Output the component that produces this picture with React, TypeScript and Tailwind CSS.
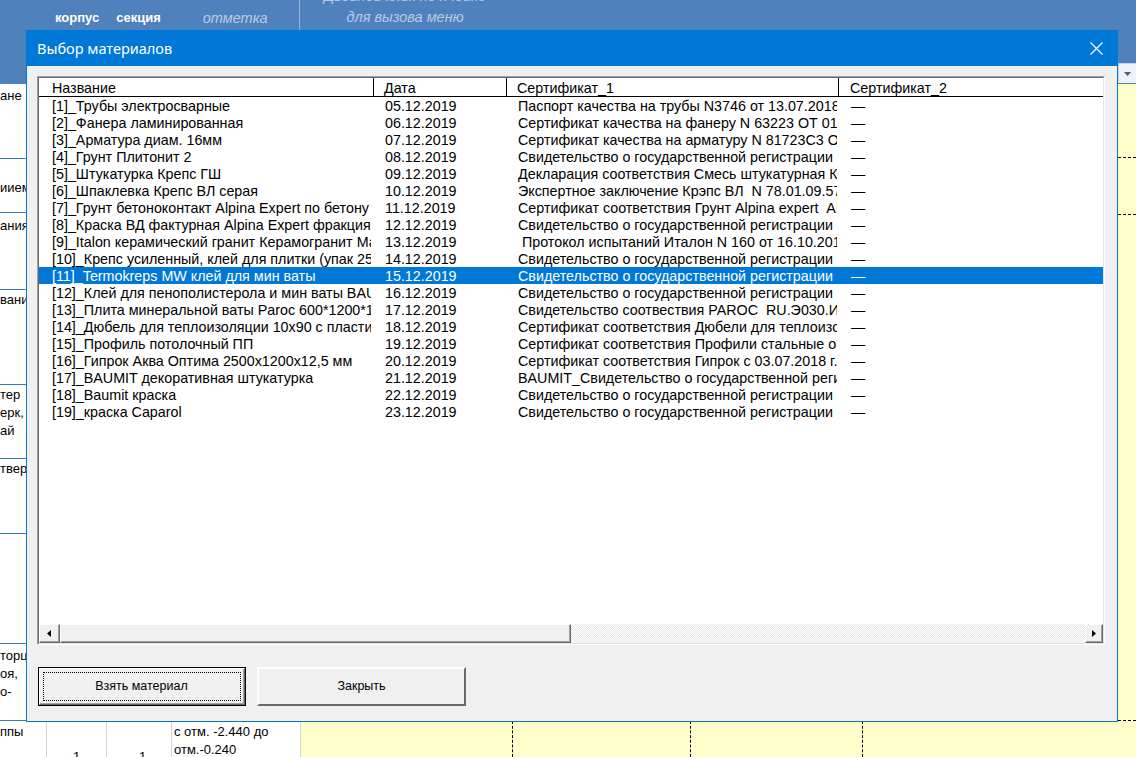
import React from "react";

const rows: [string, string, string][] = [
  ["[1]_Трубы электросварные", "05.12.2019", "Паспорт качества на трубы N3746 от 13.07.2018 г."],
  ["[2]_Фанера ламинированная", "06.12.2019", "Сертификат качества на фанеру N 63223 ОТ 01.01.2019"],
  ["[3]_Арматура диам. 16мм", "07.12.2019", "Сертификат качества на арматуру N 81723С3 ОТ 12.11.2019"],
  ["[4]_Грунт Плитонит 2", "08.12.2019", "Свидетельство о государственной регистрации  N RU.77.99"],
  ["[5]_Штукатурка Крепс ГШ", "09.12.2019", "Декларация соответствия Смесь штукатурная Крепс ГШ"],
  ["[6]_Шпаклевка Крепс ВЛ серая", "10.12.2019", "Экспертное заключение Крэпс ВЛ  N 78.01.09.574.П.000"],
  ["[7]_Грунт бетоноконтакт Alpina Expert по бетону", "11.12.2019", "Сертификат соответствия Грунт Alpina expert  АГ-2019"],
  ["[8]_Краска ВД фактурная Alpina Expert фракция 0,5", "12.12.2019", "Свидетельство о государственной регистрации RU.77.99"],
  ["[9]_Italon керамический гранит Керамогранит Магнум", "13.12.2019", " Протокол испытаний Италон N 160 от 16.10.2019 г."],
  ["[10]_Крепс усиленный, клей для плитки (упак 25 кг)", "14.12.2019", "Свидетельство о государственной регистрации"],
  ["[11]_Termokreps MW клей для мин ваты", "15.12.2019", "Свидетельство о государственной регистрации от 2019"],
  ["[12]_Клей для пенополистерола и мин ваты BAUMIT", "16.12.2019", "Свидетельство о государственной регистрации RU.77.99"],
  ["[13]_Плита минеральной ваты Paroc 600*1200*100", "17.12.2019", "Свидетельство соотвествия PAROC  RU.Э030.И.00001"],
  ["[14]_Дюбель для теплоизоляции 10х90 с пластиковым", "18.12.2019", "Сертификат соответствия Дюбели для теплоизоляции"],
  ["[15]_Профиль потолочный ПП", "19.12.2019", "Сертификат соответствия Профили стальные оцинкованные"],
  ["[16]_Гипрок Аква Оптима 2500х1200х12,5 мм", "20.12.2019", "Сертификат соответствия Гипрок с 03.07.2018 г. по 2021"],
  ["[17]_BAUMIT декоративная штукатурка", "21.12.2019", "BAUMIT_Свидетельство о государственной регистрации"],
  ["[18]_Baumit краска", "22.12.2019", "Свидетельство о государственной регистрации RU.77.99"],
  ["[19]_краска Caparol", "23.12.2019", "Свидетельство о государственной регистрации RU.77.99"],
];

const leftRows: { h: string; pt: string; lines: string[] }[] = [
  { h: "h-[75px]", pt: "pt-[3px]", lines: ["ане"] },
  { h: "h-[54px]", pt: "pt-[20px]", lines: ["иием"] },
  { h: "h-[77px]", pt: "pt-[4px]", lines: ["ания"] },
  { h: "h-[95px]", pt: "pt-[1px]", lines: ["вани"] },
  { h: "h-[75px]", pt: "pt-[1px]", lines: ["тер", "ерк,", "ай"] },
  { h: "h-[75px]", pt: "pt-[1px]", lines: ["твер"] },
  { h: "h-[110px]", pt: "pt-[1px]", lines: [] },
  { h: "h-[77px]", pt: "pt-[3px]", lines: ["торц", "оя,", "о-"] },
];

function Raised({ children, className }: { children?: React.ReactNode; className?: string }) {
  return (
    <div className={"border-t border-l border-r border-b border-t-white border-l-white border-r-[#696969] border-b-[#696969] " + (className || "")}>
      <div className="w-full h-full border-r border-b border-r-[#a0a0a0] border-b-[#a0a0a0] bg-[#f0f0f0] flex items-center justify-center">
        {children}
      </div>
    </div>
  );
}

export default function App() {
  return (
    <div className="relative w-[1136px] h-[757px] overflow-hidden bg-white font-['Liberation_Sans',Arial,sans-serif] text-black">
      {/* header band */}
      <div className="h-[84px] bg-[#4f81bd] flex">
        <div className="w-[300px] border-r border-[#9fb3cf] flex items-start pt-[9px] text-[13px] leading-[18px]">
          <span className="ml-[55px] font-bold text-white">корпус</span>
          <span className="ml-[17px] font-bold text-white">секция</span>
          <span className="ml-[42px] italic text-[#b8cbe6] text-[14.5px]">отметка</span>
        </div>
        <div className="w-[210px] flex flex-col items-center -mt-[14px] italic text-[14.5px] leading-[21px] text-[#b8cbe6]">
          <span>Двойной клик по ячейке</span>
          <span>для вызова меню</span>
        </div>
        <div className="flex-1 flex justify-end items-start pt-[63px]">
          <div className="w-[18px] h-[20px] bg-[#eef1f5] border-l border-t border-[#c9d3e0] flex items-center justify-center">
            <svg width="7" height="4" viewBox="0 0 7 4"><path d="M0 0h7L3.5 4z" fill="#5a5a5a" /></svg>
          </div>
        </div>
      </div>

      {/* body upper */}
      <div className="flex h-[637px]">
        <div className="w-[301px] flex flex-col bg-white border-r border-[#d4d4d4]">
          {leftRows.map((r, i) => (
            <div key={i} className={r.h + " border-b border-[#3c78c3] " + r.pt + " text-[13px] leading-[18px] whitespace-nowrap overflow-hidden"}>
              {r.lines.map((l, j) => (
                <div key={j}>{l}</div>
              ))}
            </div>
          ))}
        </div>
        <div className="flex-1 bg-[#ffffcc] flex flex-col">
          <div className="h-[74px] border-b border-dashed border-black"></div>
          <div className="h-[57px] border-b border-dashed border-black"></div>
          <div className="flex-1"></div>
          <div className="h-0 border-b border-dashed border-black"></div>
        </div>
      </div>

      {/* body lower */}
      <div className="flex h-[36px] text-[13px] leading-[18px]">
        <div className="w-[47px] border-r border-[#d4d4d4] pt-[2px] overflow-hidden whitespace-nowrap">ппы</div>
        <div className="w-[60px] border-r border-[#d4d4d4] relative overflow-hidden">
          <span className="absolute left-[26px] top-[27px]">1</span>
        </div>
        <div className="w-[65px] border-r border-[#d4d4d4] relative overflow-hidden">
          <span className="absolute left-[32px] top-[27px]">1</span>
        </div>
        <div className="w-[129px] pl-[2px] pt-[2px] whitespace-nowrap border-r border-[#d4d4d4]">
          <div>с отм. -2.440 до</div>
          <div>отм.-0.240</div>
        </div>
        <div className="flex-1 bg-[#ffffcc] flex">
          <div className="w-[212px] border-r border-dashed border-black"></div>
          <div className="w-[178px] border-r border-dashed border-black"></div>
          <div className="w-[172px] border-r border-dashed border-black"></div>
        </div>
      </div>

      {/* dialog window */}
      <div className="absolute left-[26px] top-[30px] w-[1092px] h-[692px] border border-[#0078d7] bg-[#f0f0f0] flex flex-col">
        <div className="h-[35px] bg-[#0078d7] flex items-center justify-between pl-[10px] pr-[14px] text-white font-['Noto_Sans',sans-serif] text-[14.5px]">
          <span>Выбор материалов</span>
          <svg width="13" height="13" viewBox="0 0 13 13">
            <path d="M0.5 0.5L12.5 12.5M12.5 0.5L0.5 12.5" stroke="white" strokeWidth="1.1" />
          </svg>
        </div>
        <div className="flex-1 pl-[10px] pt-[10px] flex flex-col">
          {/* list box */}
          <div className="w-[1068px] h-[569px] border-t border-l border-t-[#a0a0a0] border-l-[#a0a0a0] border-b border-r border-b-white border-r-white">
            <div className="w-full h-full border-t border-l border-t-[#696969] border-l-[#696969] border-b border-r border-b-[#e3e3e3] border-r-[#e3e3e3] bg-white flex flex-col text-[14.3px] leading-[17px]">
              <div className="h-[19px] border-b border-black flex shrink-0">
                <div className="w-[334px] pl-[13px] pt-[2px]">Название</div>
                <div className="w-[133px] border-l border-black pl-[10px] pt-[2px]">Дата</div>
                <div className="w-[332px] border-l border-black pl-[10px] pt-[2px]">Сертификат_1</div>
                <div className="flex-1 border-l border-black pl-[11px] pt-[2px]">Сертификат_2</div>
              </div>
              {rows.map((r, i) => {
                const sel = i === 10;
                return (
                  <div key={i} className={"h-[17px] flex shrink-0 whitespace-nowrap overflow-hidden " + (sel ? "bg-[#0078d7] text-white" : "")}>
                    <div className="w-[332px] mr-[2px] pl-[13px] pt-[1px] overflow-hidden">{r[0]}</div>
                    <div className="w-[131px] mr-[2px] pl-[12px] pt-[1px] overflow-hidden">{r[1]}</div>
                    <div className="w-[331px] mr-[1px] pl-[12px] pt-[1px] overflow-hidden whitespace-pre">{r[2]}</div>
                    <div className="flex-1 pl-[13px] pt-[1px] overflow-hidden">—</div>
                  </div>
                );
              })}
              <div className="flex-1"></div>
              {/* horizontal scrollbar */}
              <div className="h-[19px] flex shrink-0 bg-[length:2px_2px] bg-[repeating-conic-gradient(#ffffff_0_25%,#e6e6e6_0_50%)]">
                <Raised className="w-[21px] h-full">
                  <svg width="4" height="7" viewBox="0 0 4 7"><path d="M4 0v7L0 3.5z" fill="#000" /></svg>
                </Raised>
                <Raised className="w-[511px] h-full" />
                <div className="flex-1"></div>
                <Raised className="w-[18px] h-full">
                  <svg width="4" height="7" viewBox="0 0 4 7"><path d="M0 0v7l4-3.5z" fill="#000" /></svg>
                </Raised>
              </div>
            </div>
          </div>
          {/* buttons */}
          <div className="flex mt-[22px] ml-[1px] gap-[11px] text-[12.5px] font-['Liberation_Sans',Arial,sans-serif]">
            <div className="w-[208px] h-[39px] border border-black">
              <Raised className="w-full h-full">
                <div className="w-[198px] h-[29px] border border-dotted border-black flex items-center justify-center">Взять материал</div>
              </Raised>
            </div>
            <div className="w-[209px] h-[39px] border-t-2 border-l-2 border-t-white border-l-white border-b-2 border-r-2 border-b-[#696969] border-r-[#696969] bg-[#f0f0f0] flex items-center justify-center">
              Закрыть
            </div>
          </div>
        </div>
      </div>
    </div>
  );
}
